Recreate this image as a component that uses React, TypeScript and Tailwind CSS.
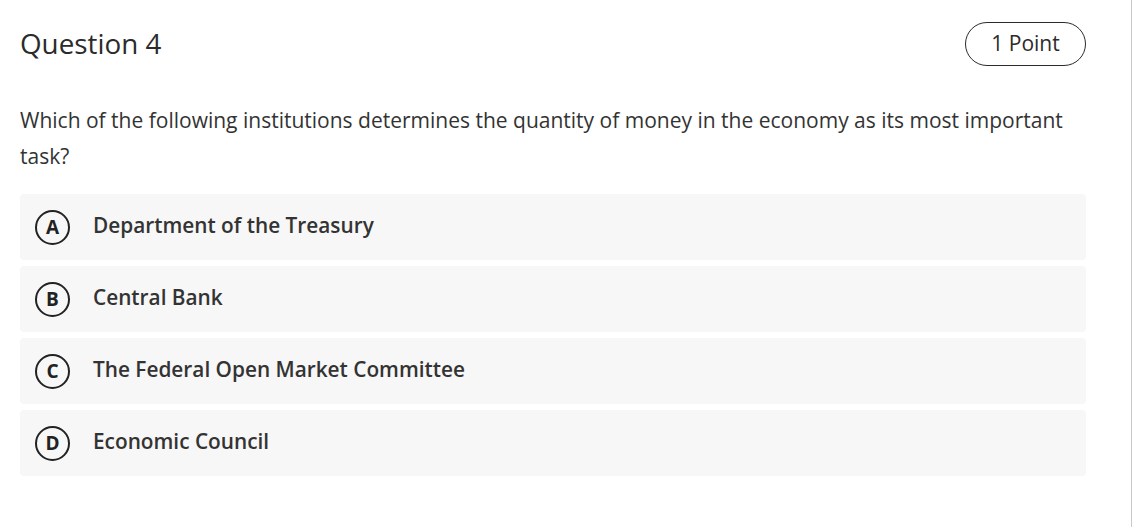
const options = [
  { letter: "A", text: "Department of the Treasury" },
  { letter: "B", text: "Central Bank" },
  { letter: "C", text: "The Federal Open Market Committee" },
  { letter: "D", text: "Economic Council" },
];

export default function App() {
  return (
    <div
      className="w-[1132px] h-[527px] bg-white border-r border-[#c8c8c8] text-[#2b2b2b]"
      style={{ fontFamily: '"Open Sans", "Liberation Sans", sans-serif' }}
    >
      <div className="w-[1066px] ml-5 pt-[22px]">
        {/* Header */}
        <div className="flex items-center justify-between h-11">
          <h2 className="text-[27.8px] font-normal">Question 4</h2>
          <div className="h-11 w-[121px] rounded-full border border-[#2b2b2b] flex items-center justify-center text-[21px]">
            1 Point
          </div>
        </div>

        {/* Question */}
        <p className="mt-9 text-[21px] leading-9 text-[#333]">
          Which of the following institutions determines the quantity of money in the economy as its most important
          task?
        </p>

        {/* Options */}
        <div className="mt-5 flex flex-col gap-1.5">
          {options.map((o) => (
            <div key={o.letter} className="h-[66px] rounded bg-[#f7f7f7] flex items-center pl-[15px]">
              <span className="w-[35px] h-[35px] shrink-0 rounded-full border-[2.5px] border-[#222] flex items-center justify-center text-[19px] leading-none font-bold text-[#222]">
                {o.letter}
              </span>
              <span className="ml-[23px] pb-[3px] text-[20.8px] font-semibold text-[#333]">{o.text}</span>
            </div>
          ))}
        </div>
      </div>
    </div>
  );
}
